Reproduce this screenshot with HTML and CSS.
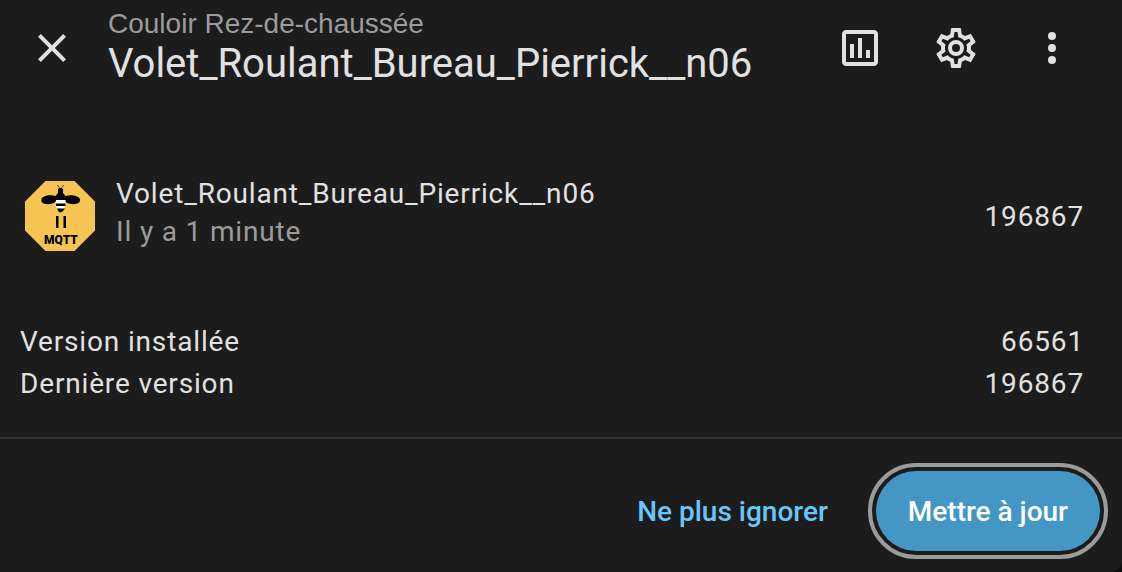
FILE: index.html
```html
<!DOCTYPE html>
<html lang="fr">
<head>
    <meta charset="UTF-8">
    <meta name="viewport" content="width=device-width, initial-scale=1.0">
    <title>Volet_Roulant_Bureau_Pierrick__n06</title>
    <link rel="stylesheet" href="styles.css">
</head>
<body>

<main class="dialog">
    <header class="header">
        <button class="icon-button" type="button" aria-label="Fermer">
            <svg viewBox="0 0 24 24"><path d="M19,6.41L17.59,5L12,10.59L6.41,5L5,6.41L10.59,12L5,17.59L6.41,19L12,13.41L17.59,19L19,17.59L13.41,12L19,6.41Z"/></svg>
        </button>
        <div class="heading">
            <p class="area">Couloir Rez-de-chaussée</p>
            <h1 class="title">Volet_Roulant_Bureau_Pierrick__n06</h1>
        </div>
        <button class="icon-button" type="button" aria-label="Historique">
            <svg viewBox="0 0 24 24"><path d="M9,17H7V10H9V17M13,17H11V7H13V17M17,17H15V13H17V17M19,19H5V5H19V19.1M19,3H5C3.9,3 3,3.9 3,5V19C3,20.1 3.9,21 5,21H19C20.1,21 21,20.1 21,19V5C21,3.9 20.1,3 19,3Z"/></svg>
        </button>
        <button class="icon-button" type="button" aria-label="Paramètres">
            <svg viewBox="0 0 24 24"><path d="M12,8A4,4 0 0,1 16,12A4,4 0 0,1 12,16A4,4 0 0,1 8,12A4,4 0 0,1 12,8M12,10A2,2 0 0,0 10,12A2,2 0 0,0 12,14A2,2 0 0,0 14,12A2,2 0 0,0 12,10M10,22C9.75,22 9.54,21.82 9.5,21.58L9.13,18.93C8.5,18.68 7.96,18.34 7.44,17.94L4.95,18.95C4.73,19.03 4.46,18.95 4.34,18.73L2.34,15.27C2.21,15.05 2.27,14.78 2.46,14.63L4.57,12.97L4.5,12L4.57,11L2.46,9.37C2.27,9.22 2.21,8.95 2.34,8.73L4.34,5.27C4.46,5.05 4.73,4.96 4.95,5.05L7.44,6.05C7.96,5.66 8.5,5.32 9.13,5.07L9.5,2.42C9.54,2.18 9.75,2 10,2H14C14.25,2 14.46,2.18 14.5,2.42L14.87,5.07C15.5,5.32 16.04,5.66 16.56,6.05L19.05,5.05C19.27,4.96 19.54,5.05 19.66,5.27L21.66,8.73C21.79,8.95 21.73,9.22 21.54,9.37L19.43,11L19.5,12L19.43,13L21.54,14.63C21.73,14.78 21.79,15.05 21.66,15.27L19.66,18.73C19.54,18.95 19.27,19.04 19.05,18.95L16.56,17.95C16.04,18.34 15.5,18.68 14.87,18.93L14.5,21.58C14.46,21.82 14.25,22 14,22H10M11.25,4L10.88,6.61C9.68,6.86 8.62,7.5 7.85,8.39L5.44,7.35L4.69,8.65L6.8,10.2C6.4,11.37 6.4,12.64 6.8,13.8L4.68,15.36L5.43,16.66L7.86,15.62C8.63,16.5 9.68,17.14 10.87,17.38L11.24,20H12.76L13.13,17.39C14.32,17.14 15.37,16.5 16.14,15.62L18.57,16.66L19.32,15.36L17.2,13.81C17.6,12.64 17.6,11.37 17.2,10.2L19.31,8.65L18.56,7.35L16.15,8.39C15.38,7.5 14.32,6.86 13.12,6.62L12.75,4H11.25Z"/></svg>
        </button>
        <button class="icon-button" type="button" aria-label="Plus d'options">
            <svg viewBox="0 0 24 24"><path d="M12,16A2,2 0 0,1 14,18A2,2 0 0,1 12,20A2,2 0 0,1 10,18A2,2 0 0,1 12,16M12,10A2,2 0 0,1 14,12A2,2 0 0,1 12,14A2,2 0 0,1 10,12A2,2 0 0,1 12,10M12,4A2,2 0 0,1 14,6A2,2 0 0,1 12,8A2,2 0 0,1 10,6A2,2 0 0,1 12,4Z"/></svg>
        </button>
    </header>

    <section class="content">
        <div class="state">
            <svg class="logo" viewBox="0 0 72 72" role="img" aria-label="MQTT">
                <path class="logo-bg" d="M21.500,1H50.500L71,21.500V50.500L50.500,71H21.500L1,50.500V21.500Z"/>
                <!-- bee -->
                <path class="bee-antenna" d="M35.500,9L35,6.500L33,5.500M37.500,9L38,6.500L40,5.500"/>
                <path d="M34,9.500C35,7.500 38,7.500 39,9.500V13L41.500,16C47,14.500 54,15.500 56,19C57,24 50,25 45,23.500C42,23 41,21 40,20H33C32,21 31,23 28,23.500C23,25 16,24 17.500,19C19,15.500 26,14.500 31.500,16L34,13Z"/>
                <path class="bee-body" d="M32,20H41.500C42.500,26 40,30 36.500,32C33,30 31,26 32,20Z"/>
                <path d="M32,23.500H41.500V26H32ZM33,28.500H41L38.500,31.500L36.500,32.500L34.500,31.500Z"/>
                <path d="M32,36H34.500V48H32ZM39.500,36H42V48H39.500Z"/>
                <text class="logo-text" x="37" y="64">MQTT</text>
            </svg>
            <div class="info">
                <div class="name">Volet_Roulant_Bureau_Pierrick__n06</div>
                <div class="time">Il y a 1 minute</div>
            </div>
            <div class="value">196867</div>
        </div>

        <dl class="versions">
            <div class="row">
                <dt>Version installée</dt>
                <dd>66561</dd>
            </div>
            <div class="row">
                <dt>Dernière version</dt>
                <dd>196867</dd>
            </div>
        </dl>
    </section>

    <footer class="actions">
        <button class="button" type="button">Ne plus ignorer</button>
        <button class="button primary" type="button">Mettre à jour</button>
    </footer>
</main>

</body>
</html>
```
FILE: styles.css
```css
body {
    margin: 0;
    background-color: #0c0c0c;
    color: #e1e1e1;
    font-family: Roboto, "Liberation Sans", sans-serif;
    font-size: 28px;
    letter-spacing: 0.03em;
}
.dialog {
    background-color: #1c1c1c;
    border-bottom-right-radius: 12px;
}
.header {
    display: flex;
    align-items: center;
    padding: 0 22px 0 4px;
}
.icon-button {
    display: flex;
    align-items: center;
    justify-content: center;
    width: 96px;
    height: 96px;
    padding: 0;
    border: none;
    background: none;
    color: inherit;
    cursor: pointer;
}
.icon-button svg {
    width: 48px;
    height: 48px;
    fill: currentColor;
}
.heading {
    flex: 1;
    min-width: 0;
    padding-left: 8px;
    letter-spacing: normal;
}
.area {
    margin: 0;
    color: #9b9b9b;
    font-family: "Liberation Sans", Arial, sans-serif;
    line-height: 32px;
}
.title {
    margin: 0;
    font-size: 40px;
    font-weight: 400;
    line-height: 48px;
}
.content {
    padding: 79px 38px 32px 20px;
}
.state {
    display: flex;
    align-items: center;
}
.logo {
    width: 80px;
    height: 72px;
}
.logo-bg {
    fill: #f6c453;
}
.bee-antenna {
    fill: none;
    stroke: #6b5525;
}
.bee-body {
    fill: #fff;
}
.logo-text {
    font-size: 12px;
    font-weight: 900;
    letter-spacing: normal;
    text-anchor: middle;
}
.info {
    flex: 1;
    padding: 0 0 6px 16px;
    line-height: 38px;
}
.time {
    color: #9b9b9b;
}
.versions {
    margin: 64px 0 0;
    line-height: 42px;
}
.row {
    display: flex;
    justify-content: space-between;
}
.row dd {
    margin: 0;
}
.actions {
    display: flex;
    justify-content: flex-end;
    gap: 16px;
    padding: 32px 22px 21px;
    border-top: 2px solid #333;
}
.button {
    height: 80px;
    padding: 0 32px;
    border: none;
    border-radius: 40px;
    background: none;
    color: #69c5fa;
    font-family: inherit;
    font-size: 28px;
    font-weight: 500;
    cursor: pointer;
}
.primary {
    background-color: #4497c4;
    color: #fff;
    outline: 4px solid #9b9b9b;
    outline-offset: 4px;
}
```
